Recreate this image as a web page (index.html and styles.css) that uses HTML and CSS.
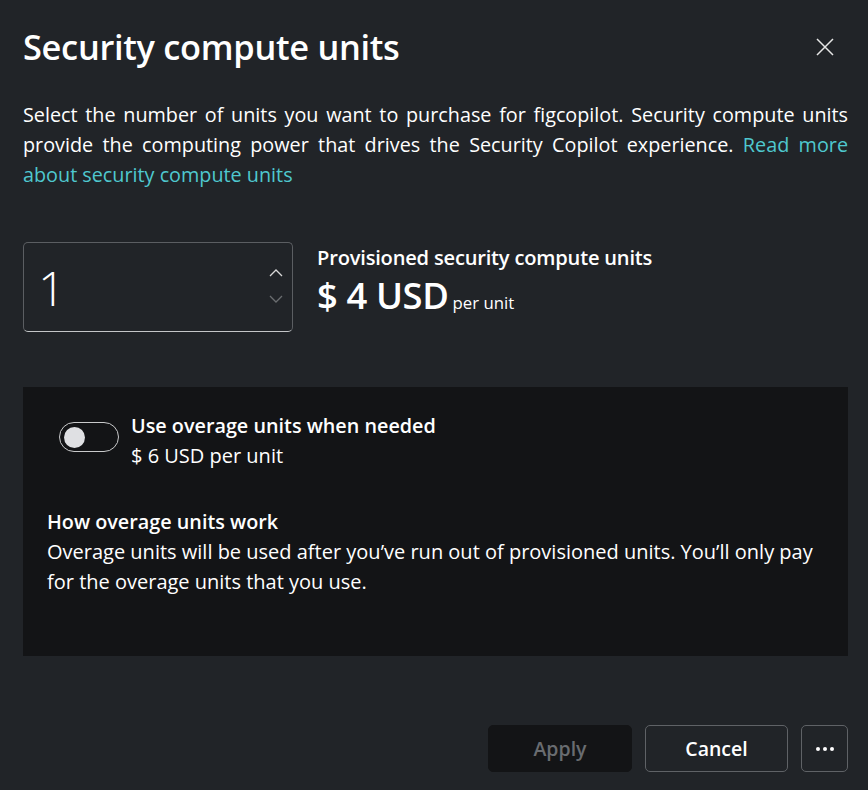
FILE: index.html
```html
<!DOCTYPE html>
<html lang="en">
<head>
<meta charset="utf-8">
<title>Security compute units</title>
<link rel="stylesheet" href="styles.css">
</head>
<body>
<div class="dialog">
  <div class="header">
    <h1 class="title">Security compute units</h1>
    <button class="close" aria-label="Close">
      <svg width="18" height="18" viewBox="0 0 18 18"><path d="M1 1 L17 17 M17 1 L1 17" stroke="#e6e6e6" stroke-width="1.5" fill="none"/></svg>
    </button>
  </div>
  <p class="intro">Select the number of units you want to purchase for figcopilot. Security compute units provide the computing power that drives the Security Copilot experience. <a class="link" href="#">Read more about security compute units</a></p>

  <div class="units">
    <div class="spin">
      <span class="spin-value">1</span>
      <div class="spin-arrows">
        <svg width="14" height="8" viewBox="0 0 14 8"><path d="M1 7 L7 1 L13 7" stroke="#d8d8d8" stroke-width="1.3" fill="none"/></svg>
        <svg width="14" height="8" viewBox="0 0 14 8"><path d="M1 1 L7 7 L13 1" stroke="#6a6d70" stroke-width="1.3" fill="none"/></svg>
      </div>
    </div>
    <div class="price">
      <div class="price-label">Provisioned security compute units</div>
      <div class="price-value"><span class="big">$ 4 USD</span> <span class="per">per unit</span></div>
    </div>
  </div>

  <div class="panel">
    <div class="toggle-row">
      <span class="toggle"><span class="knob"></span></span>
      <div class="toggle-text">
        <div class="toggle-title">Use overage units when needed</div>
        <div class="toggle-sub">$ 6 USD per unit</div>
      </div>
    </div>
    <div class="how">
      <div class="how-title">How overage units work</div>
      <div class="how-text">Overage units will be used after you’ve run out of provisioned units. You’ll only pay for the overage units that you use.</div>
    </div>
  </div>

  <div class="footer">
    <button class="btn btn-apply" disabled>Apply</button>
    <button class="btn btn-cancel">Cancel</button>
    <button class="btn btn-more" aria-label="More">
      <svg width="20" height="6" viewBox="0 0 20 6"><circle cx="3" cy="3" r="2" fill="#fff"/><circle cx="10" cy="3" r="2" fill="#fff"/><circle cx="17" cy="3" r="2" fill="#fff"/></svg>
    </button>
  </div>
</div>
</body>
</html>
```
FILE: styles.css
```css
html, body {
  margin: 0;
  padding: 0;
  background: #212428;
}
body {
  font-family: "Segoe UI", "Open Sans", "Noto Sans", sans-serif;
  color: #ffffff;
  width: 868px;
  height: 790px;
  overflow: hidden;
}
.dialog {
  padding: 0 20px 0 23px;
  display: flex;
  flex-direction: column;
}
.header {
  display: flex;
  align-items: center;
  justify-content: space-between;
  height: 96px;
}
.title {
  margin: 0;
  font-size: 34.4px;
  font-weight: 600;
  letter-spacing: -0.3px;
  line-height: 40px;
  padding-bottom: 2px;
}
.close {
  background: none;
  border: 0;
  padding: 0;
  width: 18px;
  height: 18px;
  margin-right: 14px;
  margin-bottom: 3px;
  display: flex;
}
.intro {
  margin: 4px 0 0 0;
  font-size: 19.8px;
  line-height: 30px;
  text-align: justify;
  color: #ffffff;
}
.link {
  color: #4fc8cf;
  text-decoration: none;
}
.units {
  display: flex;
  margin-top: 52px;
  gap: 24px;
}
.spin {
  box-sizing: border-box;
  width: 270px;
  height: 90px;
  border: 1px solid #5b5e62;
  border-bottom-color: #c4c6c8;
  border-radius: 5px;
  display: flex;
  align-items: center;
  justify-content: space-between;
  padding: 0 9px 0 14px;
}
.spin-value {
  font-size: 48px;
  font-weight: 300;
  line-height: 1;
  padding-top: 2px;
}
.spin-arrows {
  display: flex;
  flex-direction: column;
  gap: 18px;
  padding-bottom: 2px;
}
.spin-arrows svg { display: block; }
.price {
  display: flex;
  flex-direction: column;
  padding-top: 3px;
}
.price-label {
  font-size: 20.1px;
  font-weight: 600;
  line-height: 26px;
  letter-spacing: -0.2px;
}
.price-value {
  line-height: 48px;
}
.big {
  font-size: 36.4px;
  font-weight: 600;
  letter-spacing: -0.4px;
}
.per {
  font-size: 16.8px;
}
.panel {
  margin-top: 55px;
  background: #131416;
  height: 269px;
  box-sizing: border-box;
  padding: 24px 24px 0 24px;
  display: flex;
  flex-direction: column;
}
.toggle-row {
  display: flex;
  align-items: flex-start;
  gap: 12px;
  padding-left: 12px;
}
.toggle {
  box-sizing: border-box;
  width: 60px;
  height: 30px;
  margin-top: 11px;
  border: 1px solid #c9cacb;
  border-radius: 15px;
  display: flex;
  align-items: center;
  padding-left: 4px;
}
.knob {
  width: 21px;
  height: 21px;
  border-radius: 50%;
  background: #dfe0e3;
}
.toggle-title {
  font-size: 19.8px;
  font-weight: 600;
  line-height: 30px;
}
.toggle-sub {
  font-size: 20px;
  line-height: 30px;
}
.how {
  margin-top: 36px;
}
.how-title {
  font-size: 19.8px;
  font-weight: 600;
  line-height: 30px;
}
.how-text {
  font-size: 20px;
  line-height: 30px;
  max-width: 775px;
}
.footer {
  display: flex;
  justify-content: flex-end;
  gap: 13px;
  margin-top: 69px;
}
.btn {
  box-sizing: border-box;
  height: 47px;
  border-radius: 5px;
  font-family: inherit;
  font-size: 19.5px;
  font-weight: 600;
  color: #ffffff;
  background: transparent;
  border: 1px solid #5f6266;
  padding: 0 0 0 0;
  display: flex;
  align-items: center;
  justify-content: center;
}
.btn-apply {
  width: 144px;
  background: #131416;
  border-color: #131416;
  color: #696c70;
}
.btn-cancel {
  width: 143px;
}
.btn-more {
  width: 47px;
}
```
